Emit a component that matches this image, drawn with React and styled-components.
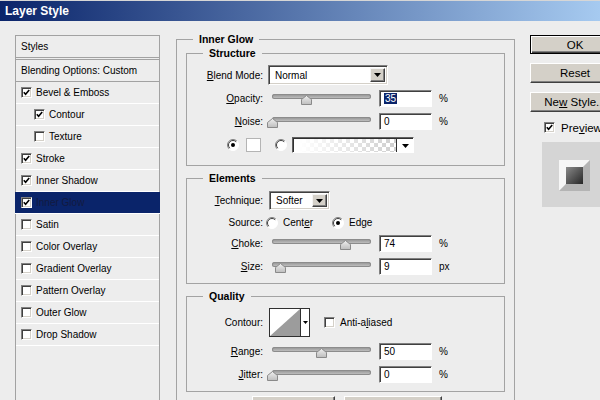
import styled, { createGlobalStyle } from 'styled-components'

const GlobalStyle = createGlobalStyle`
  html, body {
    margin: 0;
    padding: 0;
    overflow: hidden;
    background: #ededed;
  }
  body {
    font-family: 'Liberation Sans', Arial, sans-serif;
    font-size: 10px;
    color: #000;
  }
`

/* data */
const styleItems = [
  { name: 'Bevel & Emboss', checked: true },
  { name: 'Contour', checked: true, indent: true },
  { name: 'Texture', checked: false, indent: true },
  { name: 'Stroke', checked: true },
  { name: 'Inner Shadow', checked: true },
  { name: 'Inner Glow', checked: true, selected: true },
  { name: 'Satin', checked: false },
  { name: 'Color Overlay', checked: false },
  { name: 'Gradient Overlay', checked: false },
  { name: 'Pattern Overlay', checked: false },
  { name: 'Outer Glow', checked: false },
  { name: 'Drop Shadow', checked: false },
]

/* small drawn controls */
function Check({ checked }) {
  return (
    <CheckBox>
      {checked && (
        <svg width="7" height="7" viewBox="0 0 7 7">
          <path d="M0.8 3.2 L2.6 5.2 L6.2 1" stroke="#000" strokeWidth="1.6" fill="none" />
        </svg>
      )}
    </CheckBox>
  )
}

function Radio({ checked, ml }) {
  return (
    <RadioIcon width="12" height="12" viewBox="0 0 12 12" $ml={ml}>
      <circle cx="6" cy="6" r="5.5" fill="#fff" />
      <path d="M2.1 9.9 A5.5 5.5 0 0 1 9.9 2.1" stroke="#808080" fill="none" />
      <path d="M2.8 9.2 A4.5 4.5 0 0 1 9.2 2.8" stroke="#404040" fill="none" />
      <path d="M2.1 9.9 A5.5 5.5 0 0 0 9.9 2.1" stroke="#fff" fill="none" />
      {checked && <circle cx="6" cy="6" r="2" fill="#000" />}
    </RadioIcon>
  )
}

function DownArrow({ w = 7 }) {
  return (
    <svg width={w} height={Math.ceil(w / 2)} viewBox={`0 0 ${w} ${Math.ceil(w / 2)}`}>
      <polygon points={`0,0 ${w},0 ${w / 2},${Math.ceil(w / 2)}`} fill="#000" />
    </svg>
  )
}

function Slider({ value }) {
  return (
    <SliderWrap>
      <Track />
      <Thumb width="11" height="10" viewBox="0 0 11 10" style={{ left: value * 99 - 1.5 }}>
        <defs>
          <linearGradient id="thumbg" x1="0" y1="0" x2="0" y2="1">
            <stop offset="0" stopColor="#f0f0f0" />
            <stop offset="1" stopColor="#bdbdbd" />
          </linearGradient>
        </defs>
        <path d="M0.5 4.5 L5.5 0.5 L10.5 4.5 L10.5 9.5 L0.5 9.5 Z" fill="url(#thumbg)" stroke="#8a8a8a" />
      </Thumb>
    </SliderWrap>
  )
}

function NumberRow({ label, value, unit, slider, mt, selected }) {
  return (
    <Row $h={17} $mt={mt}>
      <Label>
        <u>{label[0]}</u>
        {label.slice(1)}
      </Label>
      <Slider value={slider} />
      <NumField>{selected ? <Selected>{value}</Selected> : value}</NumField>
      <Unit>{unit}</Unit>
    </Row>
  )
}

export default function App() {
  return (
    <Window>
      <GlobalStyle />
      <TitleBar>Layer Style</TitleBar>
      <Body>
        {/* 왼쪽 스타일 목록 */}
        <StylesPanel>
          <HeaderRow>Styles</HeaderRow>
          <HeaderRow $top>Blending Options: Custom</HeaderRow>
          {styleItems.map((item) => (
            <StyleRow key={item.name} $indent={item.indent} $selected={item.selected}>
              <Check checked={item.checked} />
              <span>{item.name}</span>
            </StyleRow>
          ))}
        </StylesPanel>

        {/* 가운데 옵션 */}
        <Group $outer>
          <Legend $ml={7}>Inner Glow</Legend>

          <Group>
            <Legend $ml={16}>Structure</Legend>
            <Row $h={20} $mt={6}>
              <Label>
                <u>B</u>lend Mode:
              </Label>
              <Select $w={120} $ml={5}>
                <span>Normal</span>
                <SelectButton>
                  <DownArrow />
                </SelectButton>
              </Select>
            </Row>
            <NumberRow label="Opacity:" value="35" unit="%" slider={0.35} mt={5} selected />
            <NumberRow label="Noise:" value="0" unit="%" slider={0} mt={6} />
            <Row $h={16} $mt={7} $pl={40}>
              <Radio checked />
              <Swatch />
              <Radio ml={14} />
              <GradientPicker>
                <GradientFill />
                <GradientArrow>
                  <DownArrow />
                </GradientArrow>
              </GradientPicker>
            </Row>
          </Group>

          <Group $mt={6} $pb={8}>
            <Legend $ml={16}>Elements</Legend>
            <Row $h={19} $mt={7}>
              <Label>
                <u>T</u>echnique:
              </Label>
              <Select $w={61} $ml={6}>
                <span>Softer</span>
                <SelectButton>
                  <DownArrow />
                </SelectButton>
              </Select>
            </Row>
            <Row $h={17} $mt={4}>
              <Label>Source:</Label>
              <Radio ml={3} />
              <OptionText>
                Cent<u>e</u>r
              </OptionText>
              <Radio ml={19} checked />
              <OptionText>
                Ed<u>g</u>e
              </OptionText>
            </Row>
            <NumberRow label="Choke:" value="74" unit="%" slider={0.74} mt={4} />
            <NumberRow label="Size:" value="9" unit="px" slider={0.09} mt={6} />
          </Group>

          <Group $mt={6} $pb={8}>
            <Legend $ml={16}>Quality</Legend>
            <Row $h={29} $mt={6}>
              <Label>Contour:</Label>
              <ContourPicker>
                <svg width="30" height="27" viewBox="0 0 30 27">
                  <rect width="30" height="27" fill="#fff" />
                  <polygon points="0,27 30,0 30,27" fill="#9c9c9c" />
                </svg>
                <ContourArrow>
                  <DownArrow w={5} />
                </ContourArrow>
              </ContourPicker>
              <CheckSpacer>
                <Check />
              </CheckSpacer>
              <OptionText>
                Anti-a<u>l</u>iased
              </OptionText>
            </Row>
            <NumberRow label="Range:" value="50" unit="%" slider={0.5} mt={6} />
            <NumberRow label="Jitter:" value="0" unit="%" slider={0} mt={6} />
          </Group>

          <BottomButtons>
            <Btn $w={83} $h={26}>Make Default</Btn>
            <Btn $w={98} $h={26}>Reset to Default</Btn>
          </BottomButtons>
        </Group>

        {/* 오른쪽 버튼 */}
        <SideColumn>
          <Btn $default $h={19}>OK</Btn>
          <Btn $mt={9}>Reset</Btn>
          <Btn $mt={9}>
            <span>
              Ne<u>w</u> Style...
            </span>
          </Btn>
          <PreviewCheck>
            <Check checked />
            <span>
              Pre<u>v</u>iew
            </span>
          </PreviewCheck>
          <PreviewBox>
            <svg width="31" height="31" viewBox="0 0 31 31">
              <defs>
                <linearGradient id="prevg" x1="0" y1="0" x2="1" y2="1">
                  <stop offset="0" stopColor="#8a8a8a" />
                  <stop offset="1" stopColor="#262626" />
                </linearGradient>
              </defs>
              <polygon points="0,0 31,0 24,7 7,7 7,24 0,31" fill="#f6f6f6" />
              <polygon points="31,0 31,31 0,31 7,24 24,24 24,7" fill="#b4b4b4" />
              <rect x="7" y="7" width="17" height="17" fill="url(#prevg)" />
            </svg>
          </PreviewBox>
        </SideColumn>
      </Body>
    </Window>
  )
}

const Window = styled.div`
  width: 600px;
  height: 400px;
  overflow: hidden;
  background: #ededed;
`

const TitleBar = styled.div`
  height: 20px;
  border-top: 1px solid #d6d6d6;
  background: linear-gradient(to right, #0a246a 0%, #a6caf0 100%);
  color: #fff;
  font-size: 12px;
  font-weight: bold;
  line-height: 21px;
  padding-left: 5px;
`

const Body = styled.div`
  display: flex;
  align-items: flex-start;
  padding: 12px 0 0 15px;
`

const StylesPanel = styled.div`
  width: 143px;
  height: 380px;
  margin-top: 2px;
  flex-shrink: 0;
  border: 1px solid #a2a2a2;
`

const HeaderRow = styled.div`
  height: 21px;
  display: flex;
  align-items: center;
  padding-left: 5px;
  border-bottom: 1px solid #a2a2a2;
  ${({ $top }) => $top && 'border-top: 1px solid #a2a2a2; margin-top: 1px;'}
`

const StyleRow = styled.div`
  height: 21px;
  display: flex;
  align-items: center;
  gap: 4px;
  border-bottom: 1px solid #fff;
  padding-left: ${({ $indent }) => ($indent ? 18 : 5)}px;
  background: ${({ $selected }) => ($selected ? '#0a246a' : 'transparent')};
  color: ${({ $selected }) => ($selected ? '#121a40' : '#000')};
  ${({ $selected }) => $selected && 'margin: 0 -1px; padding-left: 6px;'}
`

const CheckBox = styled.span`
  width: 11px;
  height: 11px;
  box-sizing: border-box;
  flex-shrink: 0;
  background: #fff;
  border: 1px solid;
  border-color: #808080 #fff #fff #808080;
  box-shadow: inset 1px 1px 0 #404040, inset -1px -1px 0 #d4d0c8;
  display: inline-flex;
  align-items: center;
  justify-content: center;
`

const RadioIcon = styled.svg`
  flex-shrink: 0;
  margin-left: ${({ $ml }) => $ml || 0}px;
`

const Group = styled.fieldset`
  margin: ${({ $mt }) => $mt || 0}px 0 0 ${({ $outer }) => ($outer ? 16 : 0)}px;
  padding: ${({ $outer }) => ($outer ? '2px 9px 0 9px' : '0')};
  padding-bottom: ${({ $pb, $outer }) => ($outer ? 8 : $pb ?? 12)}px;
  border: 1px solid #a3a3a3;
  width: ${({ $outer }) => ($outer ? 339 : 319)}px;
  box-sizing: border-box;
  flex-shrink: 0;
  min-width: 0;
`

const Legend = styled.legend`
  margin-left: ${({ $ml }) => $ml}px;
  padding: 0 6px;
  font-size: 10.5px;
  font-weight: bold;
  line-height: 12px;
`

const Row = styled.div`
  display: flex;
  align-items: center;
  height: ${({ $h }) => $h}px;
  margin-top: ${({ $mt }) => $mt || 0}px;
  padding-left: ${({ $pl }) => $pl || 0}px;
`

const Label = styled.span`
  width: 76px;
  flex-shrink: 0;
  text-align: right;
`

const Select = styled.div`
  width: ${({ $w }) => $w}px;
  height: 100%;
  margin-left: ${({ $ml }) => $ml}px;
  box-sizing: border-box;
  padding: 2px 2px 2px 6px;
  background: #fff;
  border: 1px solid;
  border-color: #808080 #fff #fff #808080;
  box-shadow: inset 1px 1px 0 #404040, inset -1px -1px 0 #d4d0c8;
  display: flex;
  align-items: center;
  justify-content: space-between;
`

const SelectButton = styled.span`
  width: 15px;
  height: 100%;
  box-sizing: border-box;
  background: #d4d0c8;
  border: 1px solid;
  border-color: #f4f4f4 #404040 #404040 #f4f4f4;
  box-shadow: inset -1px -1px 0 #808080;
  display: flex;
  align-items: center;
  justify-content: center;
`

const SliderWrap = styled.div`
  position: relative;
  width: 107px;
  height: 17px;
  margin-left: 5px;
  flex-shrink: 0;
`

const Track = styled.div`
  margin: 4px 4px 0;
  height: 5px;
  border-radius: 3px;
  background: linear-gradient(#8e8e8e, #c9c9c9);
  box-shadow: inset 0 0 0 1px #8c8c8c;
`

const Thumb = styled.svg`
  position: absolute;
  top: 5px;
`

const NumField = styled.div`
  width: 53px;
  height: 17px;
  margin-left: 4px;
  box-sizing: border-box;
  padding-left: 4px;
  background: #fff;
  border: 1px solid;
  border-color: #808080 #fff #fff #808080;
  box-shadow: inset 1px 1px 0 #404040;
  display: flex;
  align-items: center;
`

const Selected = styled.span`
  background: #0a246a;
  color: #fff;
  padding: 0 1px;
`

const Unit = styled.span`
  margin-left: 7px;
`

const Swatch = styled.div`
  width: 15px;
  height: 14px;
  box-sizing: border-box;
  margin-left: 7px;
  background: #fff;
  border: 1px solid #b4b4b4;
`

const GradientPicker = styled.div`
  width: 122px;
  height: 16px;
  margin-left: 5px;
  box-sizing: border-box;
  border: 1px solid;
  border-color: #606060 #fff #fff #606060;
  box-shadow: inset 1px 1px 0 #303030;
  display: flex;
`

const GradientFill = styled.div`
  flex: 1;
  margin: 1px 0 0 1px;
  background: linear-gradient(to right, #fff 5%, rgba(255, 255, 255, 0) 100%),
    repeating-conic-gradient(#cfcfcf 0 25%, #fff 0 50%) 0 0 / 8px 8px;
`

const GradientArrow = styled.div`
  width: 16px;
  margin-top: 1px;
  background: #fff;
  border-left: 1px solid #303030;
  display: flex;
  align-items: center;
  justify-content: center;
`

const OptionText = styled.span`
  margin-left: 5px;
`

const ContourPicker = styled.div`
  height: 29px;
  margin-left: 6px;
  box-sizing: border-box;
  border: 1px solid #303030;
  display: flex;
`

const ContourArrow = styled.div`
  width: 8px;
  background: #fff;
  border-left: 1px solid #303030;
  display: flex;
  align-items: center;
  justify-content: center;
`

const CheckSpacer = styled.span`
  margin-left: 14px;
  display: flex;
`

const BottomButtons = styled.div`
  display: flex;
  gap: 9px;
  margin-top: 4px;
  padding-left: 66px;
`

const Btn = styled.div`
  width: ${({ $w }) => $w || 90}px;
  height: ${({ $h }) => $h || 20}px;
  margin-top: ${({ $mt }) => $mt || 0}px;
  box-sizing: border-box;
  flex-shrink: 0;
  background: #d4d0c8;
  font-size: 11.5px;
  display: flex;
  align-items: center;
  justify-content: center;
  white-space: nowrap;
  border: 1px solid;
  border-color: ${({ $default }) => ($default ? '#000' : '#fff #404040 #404040 #fff')};
  box-shadow: ${({ $default }) =>
    $default
      ? 'inset 1px 1px 0 #fff, inset -1px -1px 0 #404040, inset -2px -2px 0 #808080'
      : 'inset -1px -1px 0 #808080'};
`

const SideColumn = styled.div`
  width: 90px;
  margin: 2px 0 0 15px;
  flex-shrink: 0;
  display: flex;
  flex-direction: column;
`

const PreviewCheck = styled.div`
  display: flex;
  align-items: center;
  gap: 6px;
  height: 11px;
  margin-top: 10px;
  padding-left: 14px;
  font-size: 11.5px;
`

const PreviewBox = styled.div`
  width: 70px;
  height: 65px;
  margin: 9px 0 0 12px;
  box-sizing: border-box;
  padding: 18px 0 0 17px;
  background: #d5d5d5;
`
